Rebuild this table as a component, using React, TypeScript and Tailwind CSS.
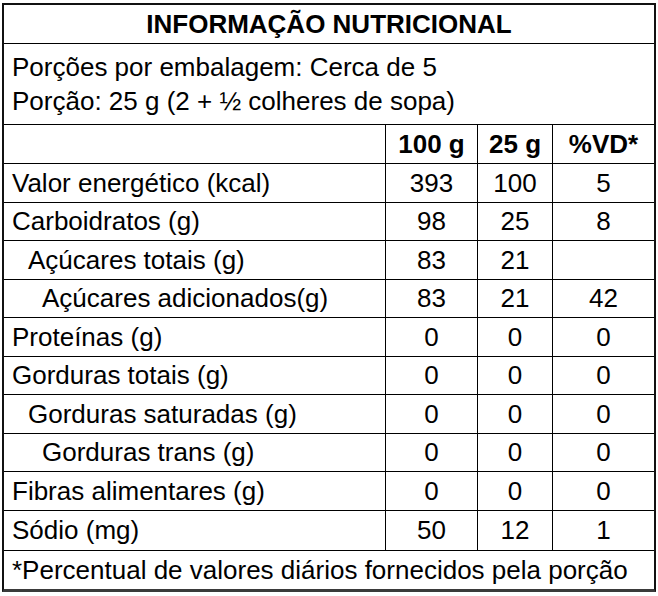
import React from 'react'

type Row = {
  label: string
  indent: 0 | 1 | 2
  per100: string
  perPortion: string
  vd: string
  h: string
}

const rows: Row[] = [
  { label: 'Valor energético (kcal)', indent: 0, per100: '393', perPortion: '100', vd: '5', h: 'h-[38px]' },
  { label: 'Carboidratos (g)', indent: 0, per100: '98', perPortion: '25', vd: '8', h: 'h-[37px]' },
  { label: 'Açúcares totais (g)', indent: 1, per100: '83', perPortion: '21', vd: '', h: 'h-[38px]' },
  { label: 'Açúcares adicionados(g)', indent: 2, per100: '83', perPortion: '21', vd: '42', h: 'h-[37px]' },
  { label: 'Proteínas (g)', indent: 0, per100: '0', perPortion: '0', vd: '0', h: 'h-[38px]' },
  { label: 'Gorduras totais (g)', indent: 0, per100: '0', perPortion: '0', vd: '0', h: 'h-[37px]' },
  { label: 'Gorduras saturadas (g)', indent: 1, per100: '0', perPortion: '0', vd: '0', h: 'h-[38px]' },
  { label: 'Gorduras trans (g)', indent: 2, per100: '0', perPortion: '0', vd: '0', h: 'h-[37px]' },
  { label: 'Fibras alimentares (g)', indent: 0, per100: '0', perPortion: '0', vd: '0', h: 'h-[38px]' },
  { label: 'Sódio (mg)', indent: 0, per100: '50', perPortion: '12', vd: '1', h: 'h-[39px]' },
]

const indentClass = ['pl-[8px]', 'pl-[24px]', 'pl-[38px]']

export default function App() {
  return (
    <div className="min-h-screen bg-white pt-[3px] pl-[2px]">
      <div className="w-[654px] border-2 border-b-[3px] border-[#111] border-b-[#3a3a3a] font-['Liberation_Sans',Arial,sans-serif] text-[26px] leading-[31px] text-black">
        {/* Title */}
        <div className="h-[39px] flex items-center justify-center font-bold border-b border-black">
          INFORMAÇÃO NUTRICIONAL
        </div>

        {/* Portions */}
        <div className="h-[81px] flex flex-col justify-center pl-[8px] leading-[34px] border-b border-black">
          <span>Porções por embalagem: Cerca de 5</span>
          <span>Porção: 25 g (2 + ½ colheres de sopa)</span>
        </div>

        {/* Header */}
        <div className="h-[39px] flex border-b border-black font-bold">
          <div className="w-[381px]" />
          <div className="w-[92px] border-l border-black flex items-center justify-center">100 g</div>
          <div className="w-[75px] border-l border-black flex items-center justify-center">25 g</div>
          <div className="flex-1 border-l border-black flex items-center justify-center">%VD*</div>
        </div>

        {/* Nutrients */}
        {rows.map((r) => (
          <div key={r.label} className={`${r.h} box-content flex border-b border-black`}>
            <div className={`w-[381px] flex items-center ${indentClass[r.indent]}`}>{r.label}</div>
            <div className="w-[92px] border-l border-black flex items-center justify-center">{r.per100}</div>
            <div className="w-[75px] border-l border-black flex items-center justify-center">{r.perPortion}</div>
            <div className="flex-1 border-l border-black flex items-center justify-center">{r.vd}</div>
          </div>
        ))}

        {/* Footnote */}
        <div className="h-[38px] flex items-center pl-[8px]">
          *Percentual de valores diários fornecidos pela porção
        </div>
      </div>
    </div>
  )
}
